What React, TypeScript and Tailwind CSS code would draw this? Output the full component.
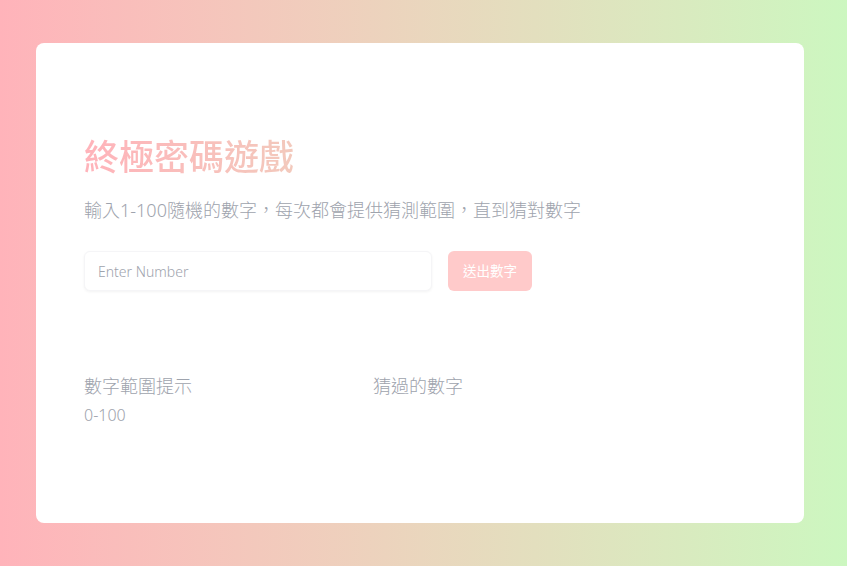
import { useState } from "react";

const font = "font-['Noto_Sans','Noto_Sans_CJK_TC',sans-serif]";

export default function App() {
  const [value, setValue] = useState("");
  const [guesses, setGuesses] = useState<number[]>([]);
  const [range] = useState("0-100");

  const submit = () => {
    const n = Number(value);
    if (!value || Number.isNaN(n)) return;
    setGuesses((prev) => [...prev, n]);
    setValue("");
  };

  return (
    <div className={`min-h-screen w-full bg-linear-to-r from-[#ffb3ba] to-[#ccf7c0] pl-[36px] pt-[43px] pb-[44px] ${font}`}>
      <div className="h-[480px] w-[768px] rounded-lg bg-white px-12 pt-[96px]">
        <h1 className="w-full bg-linear-to-r from-[#ffb3ba] to-[#ccf7c0] bg-clip-text text-[35px] font-medium leading-none text-transparent">
          終極密碼遊戲
        </h1>
        <p className="mt-[23px] text-lg font-light leading-[26px] text-[#9ea3ad]">
          輸入1-100隨機的數字，每次都會提供猜測範圍，直到猜對數字
        </p>
        <div className="mt-[28px] flex items-center gap-4">
          <input
            value={value}
            onChange={(e) => setValue(e.target.value)}
            placeholder="Enter Number"
            className="h-10 w-[348px] rounded-md border border-[#f5f5f7] bg-white px-[13px] text-sm font-light text-gray-600 shadow-[0_1px_3px_rgba(0,0,0,0.05)] outline-none placeholder:text-[#9ea3ad]"
          />
          <button
            onClick={submit}
            className="h-10 w-[84px] rounded-md bg-[#ffcaca] text-[13.5px] font-normal text-white"
          >
            送出數字
          </button>
        </div>
        <div className="mt-[82px] grid grid-cols-[289px_1fr]">
          <div>
            <h2 className="text-lg font-light leading-[26px] text-[#9ea3ad]">數字範圍提示</h2>
            <div className="mt-1 text-base font-light leading-6 text-[#9ea3ad]">{range}</div>
          </div>
          <div>
            <h2 className="text-lg font-light leading-[26px] text-[#9ea3ad]">猜過的數字</h2>
            <div className="mt-1 text-base font-light leading-6 text-[#9ea3ad]">{guesses.join(", ")}</div>
          </div>
        </div>
      </div>
    </div>
  );
}
